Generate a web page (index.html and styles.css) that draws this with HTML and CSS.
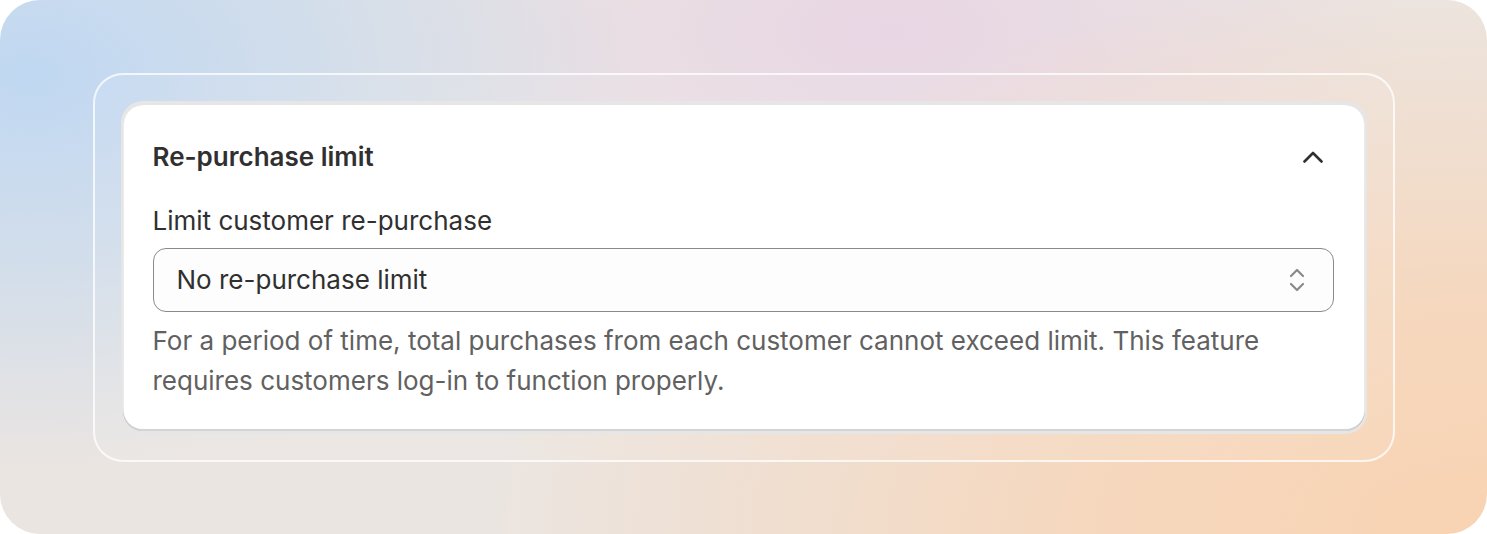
FILE: index.html
```html
<!DOCTYPE html>
<html lang="en">
<head>
<meta charset="utf-8">
<title>Re-purchase limit</title>
<link rel="stylesheet" href="styles.css">
</head>
<body>
<div class="canvas">
  <div class="frame">
    <div class="wrapper">
      <section class="card">
        <div class="card-header">
          <h2 class="title">Re-purchase limit</h2>
          <svg class="chevron" width="20" height="12" viewBox="0 0 20 12" aria-hidden="true">
            <path d="M1.5 10.5 L10 2 L18.5 10.5" fill="none" stroke="#303030" stroke-width="2.6" stroke-linecap="round" stroke-linejoin="round"/>
          </svg>
        </div>
        <label class="label">Limit customer re-purchase</label>
        <div class="select">
          <span class="select-value">No re-purchase limit</span>
          <svg class="select-arrows" width="16" height="26" viewBox="0 0 16 26" aria-hidden="true">
            <path d="M2 9 L8 3 L14 9" fill="none" stroke="#8a8a8a" stroke-width="2.2" stroke-linecap="round" stroke-linejoin="round"/>
            <path d="M2 17 L8 23 L14 17" fill="none" stroke="#8a8a8a" stroke-width="2.2" stroke-linecap="round" stroke-linejoin="round"/>
          </svg>
        </div>
        <p class="help">For a period of time, total purchases from each customer cannot exceed limit. This feature requires customers log-in to function properly.</p>
      </section>
    </div>
  </div>
</div>
</body>
</html>
```
FILE: styles.css
```css
* { box-sizing: border-box; }
html, body { margin: 0; padding: 0; background: #ffffff; }
body { font-family: Inter, "Noto Sans", sans-serif; }

.canvas {
  width: 1487px;
  height: 534px;
  border-radius: 40px;
  display: flex;
  align-items: center;
  justify-content: center;
  background:
    radial-gradient(ellipse 620px 400px at 2% 14%, rgba(192, 216, 242, 1) 0%, rgba(192, 216, 242, 0.55) 50%, rgba(192, 216, 242, 0) 100%),
    radial-gradient(ellipse 1000px 560px at 100% 100%, rgba(249, 211, 178, 1) 0%, rgba(249, 211, 178, 0.75) 40%, rgba(249, 211, 178, 0) 100%),
    radial-gradient(ellipse 520px 260px at 60% 6%, rgba(232, 214, 228, 1) 0%, rgba(232, 214, 228, 0) 100%),
    #ebe5e1;
  overflow: hidden;
}

.frame {
  width: 1302px;
  padding: 26px;
  border: 2px solid rgba(255, 255, 255, 0.75);
  border-radius: 30px;
  background: rgba(255, 255, 255, 0.08);
}

.wrapper {
  background: #e6e6e6;
  border-radius: 22px;
  padding: 4px 2px 3px;
}

.card {
  background: #ffffff;
  border-radius: 20px;
  padding: 32px 31px 30px 30px;
  box-shadow:
    inset 0 -2px 0 0 rgba(0, 0, 0, 0.17),
    inset 1px 0 0 0 rgba(0, 0, 0, 0.08),
    inset -1px 0 0 0 rgba(0, 0, 0, 0.08);
  display: flex;
  flex-direction: column;
}

.card-header {
  display: flex;
  align-items: center;
  justify-content: space-between;
  height: 40px;
  margin-bottom: 24px;
}

.title {
  margin: 0;
  font-size: 26px;
  line-height: 40px;
  font-weight: 600;
  color: #303030;
}

.chevron { margin-right: 11px; display: block; }

.label {
  font-size: 26px;
  line-height: 40px;
  color: #303030;
  margin-bottom: 7px;
}

.select {
  height: 64px;
  border: 1.5px solid #8a8a8a;
  border-radius: 13px;
  background: #fdfdfd;
  display: flex;
  align-items: center;
  justify-content: space-between;
  padding: 0 28px 0 23px;
}

.select-value {
  font-size: 26px;
  color: #303030;
}

.select-arrows { display: block; }

.help {
  margin: 9px 0 0;
  font-size: 26px;
  line-height: 40px;
  color: #616161;
}
```
